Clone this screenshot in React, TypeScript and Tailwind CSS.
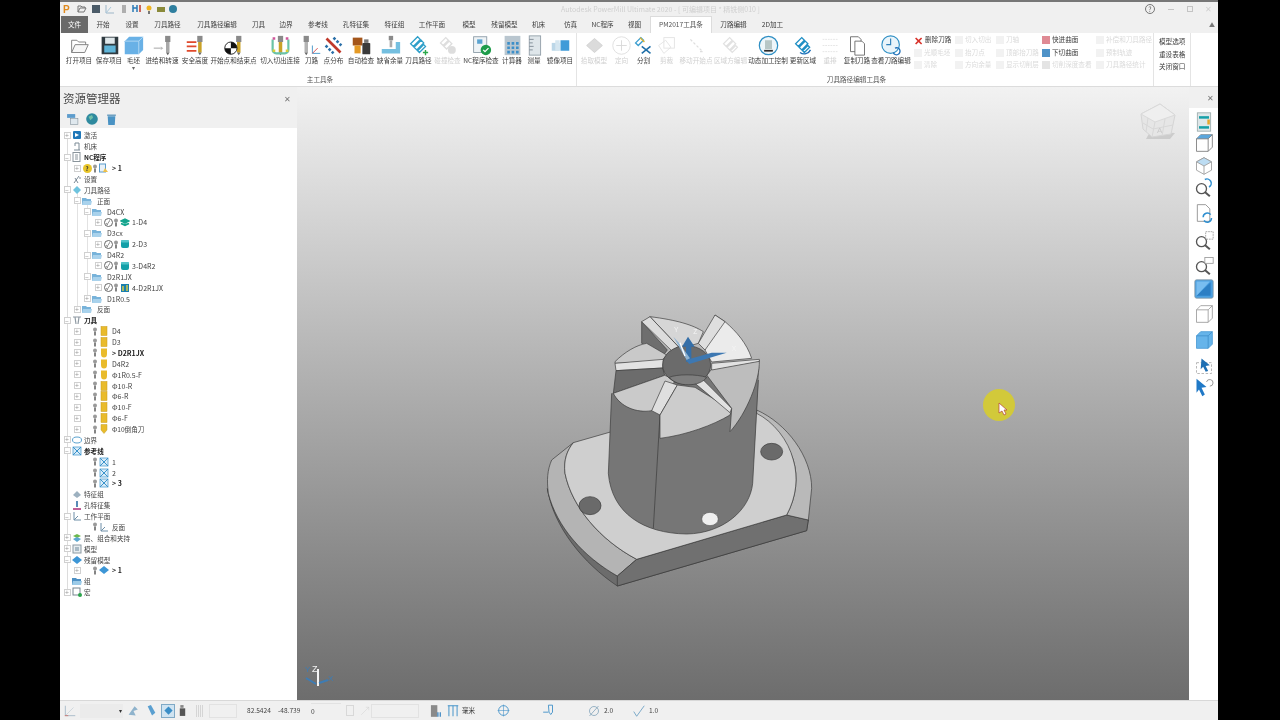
import type { ReactNode } from "react";

const FONT = "font-['Noto_Sans_CJK_SC','Noto_Sans',sans-serif]";

function Svg({ size = 22, children }: { size?: number; children: ReactNode }) {
  return (
    <svg width={size} height={size} viewBox="0 0 24 24" fill="none">
      {children}
    </svg>
  );
}

const toolBit = (x: number, c = "#c9a227") => (
  <g>
    <rect x={x} y="1" width="6" height="7" fill="#8a8a8a" />
    <rect x={x + 1} y="8" width="4" height="12" fill={c} />
    <path d={`M${x + 1} 20h4l-2 3z`} fill="#666" />
  </g>
);

const ribbonIcons: Record<string, ReactNode> = {
  open: (
    <>
      <path d="M3 20V6h6l2 2h8v3" stroke="#777" />
      <path d="M3 20l4-9h15l-4 9z" fill="#f7f7f7" stroke="#777" />
    </>
  ),
  save: (
    <>
      <rect x="3" y="2" width="19" height="20" fill="#2f3a40" />
      <rect x="7" y="3" width="11" height="7" fill="#dfe7ea" />
      <rect x="6" y="12" width="13" height="8" fill="#5fb4d8" />
    </>
  ),
  stock: (
    <>
      <path d="M2 7l5-5h16v15l-5 5H2z" fill="#69b1e6" />
      <path d="M2 7h16v15M18 7l5-5" stroke="#b9dcf5" />
    </>
  ),
  feed: (
    <>
      {toolBit(15, "#a8a8a8")}
      <path d="M2 15h8" stroke="#999" />
      <path d="M10 13l3 2-3 2z" fill="#bbb" />
    </>
  ),
  safe: (
    <>
      {toolBit(14)}
      <path d="M2 8h11M2 13h11M2 18h11" stroke="#e0492c" strokeWidth="2" />
    </>
  ),
  startend: (
    <>
      {toolBit(15)}
      <circle cx="9" cy="15" r="7" fill="#fff" stroke="#111" />
      <path d="M9 8a7 7 0 0 1 7 7H9zM9 15v7a7 7 0 0 1-7-7z" fill="#111" />
    </>
  ),
  leadin: (
    <>
      {toolBit(9)}
      <path d="M3 5v12a4 4 0 0 0 4 4h10a4 4 0 0 0 4-4V5" stroke="#6bc3a6" strokeWidth="2.5" />
      <path d="M3 4h3M18 4h3" stroke="#d0569a" strokeWidth="3" />
      <path d="M3 18h3M18 18h3" stroke="#d9cf3a" strokeWidth="3" />
    </>
  ),
  tool: (
    <>
      {toolBit(3, "#b3b3b3")}
      <path d="M13 21V12M13 21h9" stroke="#3b8fc4" />
      <path d="M13 21l6-6" stroke="#d23b3b" />
    </>
  ),
  dots: (
    <>
      <path d="M4 4l16 16" stroke="#c0392b" strokeWidth="3" />
      <path d="M12 3l9 9M3 12l9 9" stroke="#2a6fa8" strokeWidth="3" strokeDasharray="3 2" />
    </>
  ),
  check: (
    <>
      <rect x="2" y="3" width="11" height="9" fill="#a4561b" />
      <rect x="4" y="12" width="7" height="9" fill="#e59a25" />
      <rect x="13" y="9" width="9" height="13" rx="1" fill="#3a3a3a" />
      <rect x="15" y="5" width="5" height="4" fill="#777" />
    </>
  ),
  thick: (
    <>
      <rect x="10" y="1" width="5" height="5" fill="#8a8a8a" />
      <rect x="11" y="6" width="3" height="8" fill="#aaa" />
      <path d="M2 16h16V8h5v13H2z" fill="#74bfe0" />
    </>
  ),
  path: (
    <>
      <path d="M3 10l8-8 3 3-8 8zM7 14l8-8 3 3-8 8zM11 18l7-7 2 2-7 7z" stroke="#2e9fc9" strokeWidth="1.5" />
      <path d="M20 17v6M17 20h6" stroke="#2aa84a" strokeWidth="1.6" />
    </>
  ),
  collide: (
    <>
      <path d="M4 9l6-6 3 3-6 6zM8 13l6-6 3 3-6 6z" stroke="#c9c9c9" strokeWidth="1.5" />
      <circle cx="17" cy="17" r="4.5" fill="#c8c8c8" />
    </>
  ),
  ncchk: (
    <>
      <rect x="3" y="2" width="15" height="18" fill="#eef3f6" stroke="#8a9aa5" />
      <rect x="7" y="5" width="6" height="5" fill="#5ba3d0" />
      <circle cx="17" cy="17" r="6" fill="#1e9c4a" />
      <path d="M14 17l2 2 4-4" stroke="#fff" strokeWidth="1.5" />
    </>
  ),
  calc: (
    <>
      <rect x="3" y="1" width="18" height="22" fill="#b9c6cf" />
      <path d="M6 8h3v3H6zM11 8h3v3h-3zM16 8h3v3h-3zM6 13h3v3H6zM11 13h3v3h-3zM16 13h3v3h-3zM6 18h3v3H6zM11 18h3v3h-3zM16 18h3v3h-3z" fill="#3d8fc9" />
    </>
  ),
  measure: (
    <>
      <rect x="6" y="1" width="13" height="22" fill="#dfe6ea" stroke="#8f9ca5" />
      <path d="M6 5h5M6 9h4M6 13h5M6 17h4" stroke="#7a8791" />
    </>
  ),
  mirror: (
    <>
      <rect x="2" y="9" width="9" height="9" fill="#bcd7e8" />
      <rect x="6" y="6" width="5" height="12" fill="#d5e6f0" />
      <rect x="12" y="6" width="10" height="12" fill="#3f9bd8" />
    </>
  ),
  pick: <path d="M3 12l9-8 9 8-9 8z" fill="#c4c4c4" stroke="#b0b0b0" />,
  orient: (
    <>
      <circle cx="12" cy="12" r="10" stroke="#c6c6c6" />
      <path d="M12 6v12M6 12h12" stroke="#bdbdbd" />
    </>
  ),
  split: (
    <>
      <path d="M3 9l6-6 3 3-6 6z" stroke="#3b9ed0" strokeWidth="1.6" />
      <path d="M8 3l5 5" stroke="#e0b52c" strokeWidth="1.6" />
      <path d="M10 13l10 8M20 13l-10 8" stroke="#1f6fa8" strokeWidth="1.8" />
    </>
  ),
  trim: (
    <>
      <rect x="9" y="3" width="12" height="12" stroke="#cfcfcf" />
      <path d="M3 12l8-6 6 8-8 7z" stroke="#cfcfcf" />
    </>
  ),
  move: <path d="M5 5l14 14M16 19h5" stroke="#c9c9c9" strokeWidth="1.4" strokeDasharray="3 2" />,
  areaedit: <path d="M4 10l7-7 3 3-7 7zM8 14l7-7 3 3-7 7zM12 18l6-6 2 2-6 6z" stroke="#cdcdcd" strokeWidth="1.3" />,
  dynamic: (
    <>
      <circle cx="12" cy="12" r="10.5" fill="#eef6fa" stroke="#2f8fc4" strokeWidth="1.4" />
      <rect x="8" y="6" width="8" height="10" fill="#b7c6c6" />
      <rect x="7" y="17" width="10" height="2" fill="#2a2a2a" />
    </>
  ),
  update: (
    <>
      <path d="M3 10l7-7 3 3-7 7zM7 14l7-7 3 3-7 7zM11 18l6-6 2 2-6 6z" stroke="#1f8fc4" strokeWidth="1.5" />
      <path d="M8 20a8 8 0 0 0 12-3" stroke="#1f6fb8" strokeWidth="1.6" />
    </>
  ),
  reorder: <path d="M3 5h18M3 12h18M3 19h18" stroke="#cfcfcf" strokeDasharray="2 1" />,
  copy: (
    <>
      <path d="M4 2h9l3 3v14H4z" fill="#fff" stroke="#666" />
      <path d="M9 7h8l3 3v13H9z" fill="#fff" stroke="#666" />
    </>
  ),
  clock: (
    <>
      <circle cx="11" cy="11" r="10" fill="#e9f4fa" stroke="#2f8fc4" strokeWidth="1.3" />
      <path d="M11 4v7H6" stroke="#2f7fb8" strokeWidth="1.3" />
      <path d="M16 15a4 4 0 1 1-2 5" stroke="#1f6fb8" strokeWidth="1.5" />
    </>
  ),
};

const mainButtons = [
  ["打开项目", "open", "w-[30px]"],
  ["保存项目", "save", "w-[30px]"],
  ["毛坯", "stock", "w-[19px]"],
  ["进给和转速", "feed", "w-[38px]"],
  ["安全高度", "safe", "w-[28px]"],
  ["开始点和结束点", "startend", "w-[49px]"],
  ["切入切出连接", "leadin", "w-[44px]"],
  ["刀路", "tool", "w-[19px]"],
  ["点分布", "dots", "w-[25px]"],
  ["自动检查", "check", "w-[30px]"],
  ["缺省余量", "thick", "w-[28px]"],
  ["刀具路径", "path", "w-[29px]"],
  ["碰撞检查", "collide", "w-[29px]", "off"],
  ["NC程序检查", "ncchk", "w-[38px]"],
  ["计算器", "calc", "w-[24px]"],
  ["测量", "measure", "w-[20px]"],
  ["镜像项目", "mirror", "w-[32px]"],
];

const editButtons = [
  ["拾取模型", "pick", "w-[34px]", "off"],
  ["定向", "orient", "w-[21px]", "off"],
  ["分割", "split", "w-[23px]"],
  ["剪裁", "trim", "w-[23px]", "off"],
  ["移动开始点", "move", "w-[36px]", "off"],
  ["区域方编辑", "areaedit", "w-[33px]", "off"],
  ["动态加工控制", "dynamic", "w-[42px]"],
  ["更新区域", "update", "w-[28px]"],
  ["重排", "reorder", "w-[26px]", "off"],
  ["复制刀路", "copy", "w-[28px]"],
  ["查看刀路编辑", "clock", "w-[40px]"],
];

const tabs = [
  ["开始", "w-[30px]"],
  ["设置", "w-[28px]"],
  ["刀具路径", "w-[43px]"],
  ["刀具路径编辑", "w-[56px]"],
  ["刀具", "w-[27px]"],
  ["边界", "w-[28px]"],
  ["参考线", "w-[36px]"],
  ["孔特征集", "w-[40px]"],
  ["特征组", "w-[37px]"],
  ["工作平面", "w-[38px]"],
  ["模型", "w-[36px]"],
  ["残留模型", "w-[35px]"],
  ["机床", "w-[33px]"],
  ["仿真", "w-[31px]"],
  ["NC程序", "w-[33px]"],
  ["视图", "w-[31px]"],
];

function RibbonButton({ label, icon, width, off }: { label: string; icon: string; width: string; off?: boolean }) {
  return (
    <div className={`${width} flex flex-col items-center shrink-0`}>
      <div className={`h-[21px] flex items-center ${off ? "opacity-60" : ""}`}>
        <Svg size={21}>{ribbonIcons[icon]}</Svg>
      </div>
      <span className={`text-[6.6px] leading-[9px] whitespace-nowrap ${off ? "text-[#d0d0d0]" : "text-[#3c3c3c]"}`}>
        {label}
      </span>
      {label === "毛坯" && <span className="text-[6px] leading-[6px] text-[#666]">▾</span>}
    </div>
  );
}

function SmallItem({ label, color, on }: { label: string; color: string; on?: boolean }) {
  return (
    <div className="h-[12.5px] flex items-center gap-[2px] whitespace-nowrap">
      <span className={`w-[8px] h-[8px] shrink-0 ${color}`} />
      <span className={`text-[6.6px] ${on ? "text-[#3c3c3c]" : "text-[#dadada]"}`}>{label}</span>
    </div>
  );
}

function Ribbon() {
  return (
    <div className="h-[54px] bg-white flex pl-[4px] border-b border-[#dcdcdc] shrink-0">
      <div className="w-[512px] flex flex-col shrink-0">
        <div className="flex pt-[2px] flex-1">
          {mainButtons.map(([l, i, w, o]) => (
            <RibbonButton key={l} label={l} icon={i} width={w} off={!!o} />
          ))}
        </div>
        <div className="text-center text-[6.6px] leading-[10px] text-[#555] pb-[2px]">主工具条</div>
      </div>
      <div className="w-[577px] flex flex-col border-l border-[#e4e4e4] shrink-0">
        <div className="flex flex-1">
          <div className="flex pt-[2px] shrink-0">
            {editButtons.map(([l, i, w, o]) => (
              <RibbonButton key={l} label={l} icon={i} width={w} off={!!o} />
            ))}
          </div>
          <div className="flex pl-[3px] pt-[1px]">
            <div className="w-[41px]">
              <div className="h-[12.5px] flex items-center gap-[2px] whitespace-nowrap">
                <span className="text-[11px] leading-[10px] text-[#d8322a] font-bold">✕</span>
                <span className="text-[6.6px] text-[#3c3c3c]">删除刀路</span>
              </div>
              <SmallItem label="光顺毛坯" color="bg-[#f2f2f2]" />
              <SmallItem label="清除" color="bg-[#f2f2f2]" />
            </div>
            <div className="w-[41px]">
              <SmallItem label="切入切出" color="bg-[#f2f2f2]" />
              <SmallItem label="抬刀点" color="bg-[#f2f2f2]" />
              <SmallItem label="方向余量" color="bg-[#f2f2f2]" />
            </div>
            <div className="w-[46px]">
              <SmallItem label="刀轴" color="bg-[#f2f2f2]" />
              <SmallItem label="顶部抬刀路" color="bg-[#f2f2f2]" />
              <SmallItem label="显示切削层" color="bg-[#f2f2f2]" />
            </div>
            <div className="w-[54px]">
              <SmallItem label="快进曲面" color="bg-[#df8a94]" on />
              <SmallItem label="下切曲面" color="bg-[#4f93c8]" on />
              <SmallItem label="切削深度查看" color="bg-[#e4e4e4]" />
            </div>
            <div>
              <SmallItem label="补偿和刀具路径" color="bg-[#f2f2f2]" />
              <SmallItem label="预制轨迹" color="bg-[#f2f2f2]" />
              <SmallItem label="刀具路径统计" color="bg-[#f2f2f2]" />
            </div>
          </div>
        </div>
        <div className="w-[577px] text-center text-[6.6px] leading-[10px] text-[#555] pb-[2px] pr-[18px]">
          刀具路径编辑工具条
        </div>
      </div>
      <div className="w-[38px] border-l border-r border-[#e4e4e4] pl-[5px] pt-[2px] shrink-0">
        <div className="h-[12.5px] text-[6.6px] leading-[12.5px] text-[#3c3c3c]">模型选项</div>
        <div className="h-[12.5px] text-[6.6px] leading-[12.5px] text-[#3c3c3c]">重设表格</div>
        <div className="h-[12.5px] text-[6.6px] leading-[12.5px] text-[#3c3c3c]">关闭窗口</div>
      </div>
    </div>
  );
}

function TitleBar() {
  return (
    <div className="h-[16px] border-t-2 border-[#777777] flex items-center pl-[3px] relative shrink-0">
      <svg width="120" height="12" viewBox="0 0 120 12" fill="none">
        <text x="0" y="10" fontSize="10" fontWeight="700" fill="#e08a1e" fontFamily="Liberation Sans">P</text>
        <path d="M15 9V3h3l1 1h3v1M15 9l2-4h6l-2 4z" stroke="#777" />
        <rect x="29" y="2" width="8" height="8" fill="#4b5b68" />
        <path d="M43 2v8h8" stroke="#9db6c8" />
        <path d="M43 10l5-6" stroke="#a9c9dc" />
        <path d="M60 2v8M62 2v8" stroke="#999" strokeWidth="1.5" />
        <path d="M70 2v7M74 2v7M70 5h4" stroke="#2a79b5" strokeWidth="1.5" />
        <path d="M77 2v7" stroke="#c0392b" strokeWidth="1.5" />
        <circle cx="86" cy="5" r="2.5" fill="#efb420" />
        <rect x="85" y="8" width="2" height="3" fill="#777" />
        <rect x="94" y="4" width="8" height="5" fill="#8a8a3a" />
        <circle cx="110" cy="6" r="4" fill="#2f7f9f" />
      </svg>
      <div className="absolute left-[501px] top-[1px] text-[7px] leading-[12px] text-[#cfcfcf] whitespace-nowrap">
        Autodesk PowerMill Ultimate 2020 - [ 可编辑项目 * 精铣侧010 ]
      </div>
      <div className="ml-auto flex items-center gap-[10px] pr-[6px] text-[#b5b5b5]">
        <span className="w-[10px] h-[10px] border border-[#777] rounded-full text-[7px] leading-[8px] text-center text-[#666]">?</span>
        <span className="w-[6px] h-[1px] bg-[#c4c4c4] ml-[3px]" />
        <span className="w-[6px] h-[6px] border border-[#c4c4c4] ml-[3px]" />
        <span className="text-[8px] leading-[8px] text-[#d0d0d0] ml-[2px]">✕</span>
      </div>
    </div>
  );
}

function Tabs() {
  return (
    <div className="h-[17px] flex pl-[1px] items-stretch shrink-0 text-[6.6px] text-[#3c3c3c] relative">
      <div className="w-[27px] bg-[#6a6a6a] text-white flex items-center justify-center">文件</div>
      {tabs.map(([l, w]) => (
        <div key={l} className={`${w} flex items-center justify-center whitespace-nowrap`}>{l}</div>
      ))}
      <div className="w-[62px] bg-white border border-b-0 border-[#dcdcdc] flex items-center justify-center whitespace-nowrap text-[#555]">
        PM2017工具条
      </div>
      <div className="w-[43px] flex items-center justify-center">刀路编辑</div>
      <div className="w-[35px] flex items-center justify-center">2D加工</div>
      <span className="ml-auto pr-[3px] text-[6px] self-center text-[#777]">▲</span>
    </div>
  );
}

type TreeIcon =
  | "act" | "machine" | "nc" | "ncp" | "set" | "path" | "folder" | "t1" | "t2" | "t4"
  | "tools" | "bit" | "bitr" | "bitc" | "bound" | "ref" | "feat" | "hole" | "plane"
  | "layer" | "model" | "stock" | "group" | "macro";

function TreeGlyph({ kind }: { kind: TreeIcon }) {
  const shapes: Record<TreeIcon, ReactNode> = {
    act: (
      <>
        <rect x="1" y="1" width="8" height="8" rx="1" fill="#1f77b8" />
        <path d="M3 3l4 2-4 2z" fill="#fff" />
      </>
    ),
    machine: <path d="M2 9h6M7 9V2H3v3" stroke="#7a8a95" />,
    nc: (
      <>
        <rect x="1" y="0.5" width="7" height="9" fill="#fff" stroke="#8a949b" />
        <path d="M3 3h3M3 5h3M3 7h3" stroke="#8a949b" />
      </>
    ),
    ncp: (
      <>
        <rect x="0.5" y="1" width="6" height="8" fill="#e8f1f8" stroke="#5a9ccb" />
        <path d="M6 5l3 4H4z" fill="#edc04a" />
      </>
    ),
    set: <path d="M2 9l5-7M6 9L3 4M8 3v2" stroke="#7c8a96" />,
    path: <path d="M5 1l4 4-4 4-4-4z" fill="#6ec3de" />,
    folder: (
      <>
        <path d="M0 2h4l1 1h4v6H0z" fill="#78b3da" />
        <path d="M1 5h9l-1 4H0z" fill="#a9d2ec" />
      </>
    ),
    t1: <path d="M1 4l4-2 4 2-4 2zM1 6.5l4 2 4-2" stroke="#14a58e" strokeWidth="1.4" fill="#14a58e" />,
    t2: (
      <>
        <rect x="1" y="1" width="8" height="8" rx="2" fill="#14a0a8" />
        <rect x="1" y="1" width="8" height="2.5" rx="1" fill="#52c3c8" />
      </>
    ),
    t4: (
      <>
        <rect x="1" y="1" width="8" height="8" fill="#1a7fae" />
        <path d="M3 8V3M7 8V2" stroke="#e4d13f" strokeWidth="1.4" />
      </>
    ),
    tools: <path d="M1 2h8M3 2l1 7M7 2L6 9" stroke="#8f9aa3" strokeWidth="1.2" />,
    bit: <rect x="2" y="0.5" width="6" height="9" fill="#e9bb2b" stroke="#c89a18" strokeWidth="0.5" />,
    bitr: <path d="M2 0.5h6V6a3 3.5 0 0 1-6 0z" fill="#e9bb2b" />,
    bitc: <path d="M2 0.5h6V6L5 9.5 2 6z" fill="#e9bb2b" stroke="#bfa030" strokeWidth="0.5" />,
    bound: <ellipse cx="5" cy="5" rx="4.5" ry="3" stroke="#5aa2cf" fill="#fff" />,
    ref: (
      <>
        <rect x="1" y="1" width="8" height="8" fill="#d9ecf8" stroke="#3b93cb" strokeWidth="0.7" />
        <path d="M1 1l8 8M9 1l-8 8" stroke="#3b93cb" />
      </>
    ),
    feat: <path d="M1 6l4-4 4 4-4 3z" fill="#9db1c0" />,
    hole: (
      <>
        <path d="M5 1v6" stroke="#2e6fa5" strokeWidth="1.6" />
        <path d="M1 9h8" stroke="#b03a7f" strokeWidth="1.6" />
      </>
    ),
    plane: <path d="M2 1v8h7M2 9l4-4" stroke="#6e8fa8" />,
    layer: (
      <>
        <path d="M1 3l4-2 4 2-4 2z" fill="#6cb84e" />
        <path d="M1 6l4-2 4 2-4 3z" fill="#5ca7d0" />
      </>
    ),
    model: (
      <>
        <rect x="1" y="1" width="8" height="8" fill="#e7edf0" stroke="#8c9aa3" />
        <path d="M3 3h4v4H3z" fill="#a9bac5" />
      </>
    ),
    stock: <path d="M5 1l5 4-5 4-5-4z" fill="#3d96d6" />,
    group: (
      <>
        <path d="M0 2h4l1 1h4v6H0z" fill="#4d90c4" />
        <path d="M1 5h9l-1 4H0z" fill="#9ccbe8" />
      </>
    ),
    macro: (
      <>
        <rect x="1" y="1" width="7" height="7" fill="#fff" stroke="#77858f" />
        <circle cx="8" cy="8" r="2" fill="#2aa44a" />
      </>
    ),
  };
  return (
    <svg width="10" height="10" viewBox="0 0 10 10" fill="none" className="shrink-0">
      {shapes[kind]}
    </svg>
  );
}

type Row = {
  t: string;
  lv: 0 | 1 | 2 | 3 | 4;
  icon: TreeIcon;
  exp?: "+" | "-";
  check?: boolean;
  warn?: boolean;
  bold?: boolean;
};

const rows: Row[] = [
  { t: "激活", lv: 0, icon: "act", exp: "+" },
  { t: "机床", lv: 0, icon: "machine" },
  { t: "NC程序", lv: 0, icon: "nc", exp: "-", bold: true },
  { t: "> 1", lv: 4, icon: "ncp", exp: "+", warn: true, bold: true },
  { t: "设置", lv: 0, icon: "set" },
  { t: "刀具路径", lv: 0, icon: "path", exp: "-" },
  { t: "正面", lv: 1, icon: "folder", exp: "-" },
  { t: "D4CX", lv: 2, icon: "folder", exp: "-" },
  { t: "1-D4", lv: 3, icon: "t1", exp: "+", check: true },
  { t: "D3cx", lv: 2, icon: "folder", exp: "-" },
  { t: "2-D3", lv: 3, icon: "t2", exp: "+", check: true },
  { t: "D4R2", lv: 2, icon: "folder", exp: "-" },
  { t: "3-D4R2", lv: 3, icon: "t2", exp: "+", check: true },
  { t: "D2R1JX", lv: 2, icon: "folder", exp: "-" },
  { t: "4-D2R1JX", lv: 3, icon: "t4", exp: "+", check: true },
  { t: "D1R0.5", lv: 2, icon: "folder", exp: "+" },
  { t: "反面", lv: 1, icon: "folder", exp: "+" },
  { t: "刀具", lv: 0, icon: "tools", exp: "-", bold: true },
  { t: "D4", lv: 4, icon: "bit", exp: "+" },
  { t: "D3", lv: 4, icon: "bit", exp: "+" },
  { t: "> D2R1JX", lv: 4, icon: "bitr", exp: "+", bold: true },
  { t: "D4R2", lv: 4, icon: "bitr", exp: "+" },
  { t: "Φ1R0.5-F", lv: 4, icon: "bitr", exp: "+" },
  { t: "Φ10-R", lv: 4, icon: "bit", exp: "+" },
  { t: "Φ6-R", lv: 4, icon: "bit", exp: "+" },
  { t: "Φ10-F", lv: 4, icon: "bit", exp: "+" },
  { t: "Φ6-F", lv: 4, icon: "bit", exp: "+" },
  { t: "Φ10倒角刀", lv: 4, icon: "bitc", exp: "+" },
  { t: "边界", lv: 0, icon: "bound", exp: "+" },
  { t: "参考线", lv: 0, icon: "ref", exp: "-", bold: true },
  { t: "1", lv: 4, icon: "ref" },
  { t: "2", lv: 4, icon: "ref" },
  { t: "> 3", lv: 4, icon: "ref", bold: true },
  { t: "特征组", lv: 0, icon: "feat" },
  { t: "孔特征集", lv: 0, icon: "hole" },
  { t: "工作平面", lv: 0, icon: "plane", exp: "-" },
  { t: "反面", lv: 4, icon: "plane" },
  { t: "层、组合和夹持", lv: 0, icon: "layer", exp: "+" },
  { t: "模型", lv: 0, icon: "model", exp: "+" },
  { t: "残留模型", lv: 0, icon: "stock", exp: "-" },
  { t: "> 1", lv: 4, icon: "stock", exp: "+", bold: true },
  { t: "组", lv: 0, icon: "group" },
  { t: "宏", lv: 0, icon: "macro", exp: "+" },
];

const rowPad = ["pl-[2px]", "pl-[12px]", "pl-[22px]", "pl-[33px]", "pl-[12px]"];
const iconSlot = ["w-[12px]", "w-[15px]", "w-[15px]", "w-[13px]", "w-[14px]"];

function Bulb() {
  return (
    <svg width="6" height="9" viewBox="0 0 6 9" className="shrink-0">
      <circle cx="3" cy="2.5" r="2" fill="#9a9a9a" />
      <rect x="2.2" y="4.5" width="1.6" height="4" fill="#666" />
    </svg>
  );
}

function TreeRow({ row }: { row: Row }) {
  const withBulb = row.lv >= 3;
  const textSize = /[\u4e00-\u9fff]/.test(row.t) ? "text-[6.6px]" : "text-[7px]";
  return (
    <div className={`h-[10.88px] flex items-center ${rowPad[row.lv]} relative`}>
      <span className="w-[10px] shrink-0 flex justify-center">
        {row.exp && (
          <span className="w-[7px] h-[7px] border border-[#d0d0d0] bg-white text-[#999] flex items-center justify-center text-[7px] leading-[5px]">
            {row.exp === "+" ? "+" : "–"}
          </span>
        )}
      </span>
      {withBulb && (
        <span className="w-[10px] shrink-0 flex justify-center">
          {row.check && (
            <span className="w-[9px] h-[9px] rounded-full border border-[#666] bg-white text-[6px] leading-[7px] text-center text-[#333]">✓</span>
          )}
          {row.warn && (
            <span className="w-[9px] h-[9px] rounded-full bg-[#e8c52a] text-[6px] leading-[9px] text-center font-bold text-[#333]">?</span>
          )}
        </span>
      )}
      {withBulb && <Bulb />}
      <span className={`${iconSlot[row.lv]} shrink-0 ${withBulb ? "pl-[1px]" : ""}`}>
        <TreeGlyph kind={row.icon} />
      </span>
      <span className={`${textSize} leading-[10px] whitespace-nowrap ${row.bold ? "font-bold text-[#222]" : "text-[#444]"}`}>
        {row.t}
      </span>
    </div>
  );
}

function Explorer() {
  return (
    <div className="w-[237px] flex flex-col shrink-0">
      <div className="h-[23px] flex items-center justify-between pl-[3px] pr-[6px]">
        <span className="text-[11.5px] text-[#4a4a4a]">资源管理器</span>
        <span className="text-[8px] text-[#777]">✕</span>
      </div>
      <div className="h-[18px] flex items-center gap-[6px] pl-[6px]">
        <Svg size={13}>
          <rect x="2" y="2" width="15" height="7" fill="#5d9ccc" />
          <rect x="8" y="10" width="14" height="11" fill="#dfe8ee" stroke="#7a8a95" />
        </Svg>
        <Svg size={14}>
          <circle cx="12" cy="12" r="10" fill="#2f8a9f" />
          <path d="M6 8l6-3 2 5-5 4z" fill="#6fbfa8" />
        </Svg>
        <Svg size={13}>
          <path d="M5 6h14l-1 16H6z" fill="#4a93c4" />
          <rect x="4" y="3" width="16" height="2" fill="#3a7fae" />
        </Svg>
      </div>
      <div className="flex-1 bg-white pt-[2px] relative">
        <span className="absolute left-[7px] top-[7px] h-[457px] w-px bg-[#dcdcdc]" />
        <span className="absolute left-[17px] top-[62px] h-[120px] w-px bg-[#e2e2e2]" />
        <span className="absolute left-[27px] top-[73px] h-[98px] w-px bg-[#e2e2e2]" />
        <div className="relative">
          {rows.map((r, i) => (
            <TreeRow key={i} row={r} />
          ))}
        </div>
      </div>
    </div>
  );
}

function Model() {
  return (
    <svg width="300" height="300" viewBox="0 0 900 900" className="absolute left-[233px] top-[213px]" fill="none" stroke="#3a3a3a" strokeWidth="2" strokeLinejoin="round">
      <path d="M52 565C70 680 160 790 262 858L830 692L835 660L770 645L320 778L262 828C160 770 80 680 55 580Z" fill="#6c6c6c" />
      <path d="M130 428L65 480C52 510 50 540 55 580C80 680 160 770 262 828L320 778C210 720 125 620 105 520C100 480 112 450 130 428Z" fill="#b4b4b4" />
      <path d="M262 828L320 778L770 645L835 660L830 692L262 858Z" fill="#707070" />
      <path d="M680 330C770 370 845 470 845 565L835 660L770 645C800 590 805 530 790 480C770 420 720 365 680 345Z" fill="#b9b9b9" />
      <path d="M130 428L245 395L680 340C730 365 775 420 790 480C805 530 800 590 770 645L320 778C210 720 125 620 105 520C100 480 112 450 130 428Z" fill="#cfcfcf" />
      <ellipse cx="180" cy="617" rx="33" ry="27" fill="#6a6a6a" />
      <ellipse cx="725" cy="455" rx="33" ry="25" fill="#6a6a6a" />
      <path d="M245 280L235 520C245 640 340 700 470 702C580 700 660 630 668 550L688 200Z" fill="#767676" stroke="none" />
      <path d="M245 280L235 520C245 640 340 700 470 702C580 700 660 630 668 550L685 240" />
      <path d="M390 345L370 685" />
      <ellipse cx="540" cy="657" rx="25" ry="20" fill="#efefef" stroke="#555" />
      <path d="M335 65L335 130L395 172L412 150Z" fill="#6e6e6e" />
      <path d="M360 50C440 60 490 75 520 95L505 130L470 140L445 140Z" fill="#d6d6d6" />
      <path d="M335 65L360 50L445 140L425 152Z" fill="#dcdcdc" />
      <path d="M555 45L585 65C620 95 650 130 665 175L545 186L525 150Z" fill="#ebebeb" />
      <path d="M505 130L555 45L585 65L525 150Z" fill="#dedede" />
      <path d="M255 185C285 155 320 135 350 130L410 165L395 182L255 190Z" fill="#c9c9c9" />
      <path d="M255 190L400 178L398 204L258 212Z" fill="#e2e2e2" />
      <path d="M258 212L398 204L404 226L250 280Z" fill="#6c6c6c" />
      <path d="M250 280L404 226L438 240L365 332C320 340 270 320 250 280Z" fill="#cacaca" />
      <path d="M405 243L442 255L390 345L365 332Z" fill="#dfdfdf" />
      <path d="M442 255L495 262L605 330L600 345C550 375 470 405 390 415L390 345Z" fill="#cccccc" />
      <path d="M495 250L520 240L605 325L600 338Z" fill="#e1e1e1" />
      <path d="M530 225L545 208L688 182C690 240 650 340 600 395L605 325Z" fill="#bdbdbd" />
      <path d="M545 190L688 178L688 184L545 210Z" fill="#e2e2e2" />
      <ellipse cx="470" cy="195" rx="72" ry="58" fill="#6b6b6b" />
      <path d="M418 232C440 222 500 222 530 232C510 262 440 262 418 232Z" fill="#7e7e7e" />
      <g stroke="none">
        <path d="M474 110L494 140H484V185H468V140H456Z" fill="#356fa8" />
        <path d="M468 180L545 158L590 158L545 172L478 192Z" fill="#3d78b2" />
        <path d="M470 180L430 110L448 130L480 175Z" fill="#8fb3d2" />
        <path d="M450 128L465 168" stroke="#fff" strokeWidth="4" />
      </g>
      <g fill="#f4f4f4" stroke="none" fontSize="20" fontFamily="Liberation Sans">
        <text x="432" y="96">Y</text>
        <text x="490" y="102">Z</text>
        <text x="605" y="152">X</text>
      </g>
    </svg>
  );
}

function Viewport() {
  return (
    <div className="flex-1 relative overflow-hidden bg-linear-to-b from-[#f2f2f2] to-[#6d6d6d]">
      <Model />
      <svg width="40" height="40" viewBox="0 0 40 40" className="absolute left-[841px] top-[14px]" fill="none">
        <path d="M8 38l24 0 5-6-25-1z" fill="#9a9a9a" opacity="0.35" />
        <path d="M3 13L22 3L37 14L33 33L14 36L5 28Z" fill="#e6e6e6" stroke="#d5d5d5" />
        <path d="M3 13L22 3L37 14L17 21Z" fill="#efefef" stroke="#dadada" />
        <path d="M17 21L14 36M10 17L8 31M27 18L24 35M5 22L15 28L35 24" stroke="#d8d8d8" />
        <text x="19" y="32" fontSize="8" fill="#c9c9c9" fontFamily="Liberation Sans">A</text>
      </svg>
      <svg width="34" height="30" viewBox="0 0 34 30" className="absolute left-[5px] top-[574px]" fill="none">
        <text x="10" y="11" fontSize="9" fill="#f3f3f3" fontFamily="Liberation Sans">Z</text>
        <text x="3" y="11" fontSize="8" fill="#3d7cb4" fontFamily="Liberation Sans">Y</text>
        <text x="26" y="20" fontSize="8" fill="#3d7cb4" fontFamily="Liberation Sans">X</text>
        <path d="M16 8v17" stroke="#f5f5f5" strokeWidth="2" />
        <path d="M4 17l10 6M17 22l9-3" stroke="#3d7cb4" strokeWidth="2" />
      </svg>
      <span className="absolute left-[686px] top-[302px] w-[32px] h-[32px] rounded-full bg-[#d2c93a]" />
      <svg width="10" height="14" viewBox="0 0 10 14" className="absolute left-[701px] top-[315px]">
        <path d="M1 1v10l3-2 2 4 2-1-2-4h3z" fill="#fff" stroke="#b5423a" strokeWidth="0.7" />
      </svg>
    </div>
  );
}

const sideIcons: ReactNode[] = [
  <>
    <rect x="4" y="1" width="16" height="22" fill="#dfe7e9" stroke="#9aa" />
    <rect x="6" y="5" width="12" height="3" fill="#15a0a8" />
    <rect x="6" y="17" width="12" height="3" fill="#15a0a8" />
    <rect x="16" y="9" width="3" height="6" fill="#e6a72a" />
  </>,
  <>
    <path d="M3 7l5-5h14v15l-5 5H3z" stroke="#777" fill="#fff" />
    <path d="M3 7l5-5h14l-5 5z" fill="#5aa6dc" />
    <path d="M3 7h14v15M17 7l5-5" stroke="#777" />
  </>,
  <>
    <path d="M12 2l9 5v10l-9 5-9-5V7z" fill="#fff" stroke="#999" />
    <path d="M12 2l9 5-9 5-9-5z" fill="#bcdcf2" stroke="#999" />
    <path d="M12 12v10" stroke="#999" />
  </>,
  <>
    <circle cx="9" cy="14" r="6" stroke="#555" strokeWidth="1.6" fill="#fff" />
    <path d="M13 18l6 5" stroke="#555" strokeWidth="2.4" />
    <path d="M13 3a5 5 0 1 1 5 9" stroke="#2f8fd0" strokeWidth="1.8" />
  </>,
  <>
    <path d="M4 2h10l5 5v15H4z" fill="#fff" stroke="#888" />
    <path d="M11 17a5 5 0 0 1 9-3M21 18a5 5 0 0 1-9 3" stroke="#2f8fd0" strokeWidth="1.8" />
  </>,
  <>
    <circle cx="9" cy="14" r="6" stroke="#555" strokeWidth="1.6" fill="#fff" />
    <path d="M13 18l6 5" stroke="#555" strokeWidth="2.4" />
    <rect x="14" y="2" width="9" height="9" stroke="#999" strokeDasharray="2 1" />
  </>,
  <>
    <circle cx="9" cy="14" r="6" stroke="#555" strokeWidth="1.6" fill="#fff" />
    <path d="M13 18l6 5" stroke="#555" strokeWidth="2.4" />
    <rect x="13" y="3" width="10" height="7" stroke="#999" fill="#fff" />
  </>,
  <>
    <rect x="1" y="1" width="22" height="22" rx="2" fill="#4a9fe0" stroke="#8a9aa5" />
    <path d="M3 20L20 4v16z" fill="#2d7fc4" />
    <path d="M3 3h16L3 20z" fill="#78bdf0" />
  </>,
  <>
    <path d="M3 7l5-5h14v15l-5 5H3z" stroke="#999" />
    <path d="M3 7h14v15M17 7l5-5" stroke="#999" />
  </>,
  <>
    <path d="M3 7l5-5h14v15l-5 5H3z" fill="#66b4ea" stroke="#4a9ad4" />
    <path d="M3 7h14v15M17 7l5-5" stroke="#3f8fca" />
  </>,
  <>
    <rect x="3" y="8" width="18" height="13" stroke="#aaa" strokeDasharray="3 2" />
    <path d="M9 3l10 8-5 1 3 6-3 1-3-6-3 3z" fill="#1f70b4" />
  </>,
  <>
    <path d="M3 2l12 10-6 1 4 8-3 2-4-8-3 4z" fill="#2079c7" />
    <path d="M15 6a4 4 0 1 1 4 5" stroke="#888" />
  </>,
];

const sideGaps = ["mt-0", "mt-[1px]", "mt-[3px]", "mt-[1px]", "mt-[6px]", "mt-[7px]", "mt-[5px]", "mt-[4px]", "mt-[5px]", "mt-[6px]", "mt-[6px]", "mt-[1px]"];

function SideBar() {
  return (
    <div className="w-[29px] flex flex-col shrink-0">
      <div className="h-[21px] flex items-center justify-end pr-[4px]">
        <span className="text-[8px] text-[#777]">✕</span>
      </div>
      <div className="flex-1 bg-white pt-[4px] flex flex-col items-center">
        {sideIcons.map((icon, i) => (
          <div key={i} className={`h-[20px] ${sideGaps[i]}`}>
            <Svg size={20}>{icon}</Svg>
          </div>
        ))}
      </div>
    </div>
  );
}

function StatusBar() {
  return (
    <div className="h-[20px] flex items-center text-[6.6px] text-[#444] shrink-0 pl-[3px] border-t border-[#d8d8d8]">
      <Svg size={14}>
        <path d="M4 3v17h17" stroke="#7f9db3" />
        <path d="M4 20L18 6" stroke="#b9c7d1" />
        <path d="M3 20h6" stroke="#d04a3a" />
      </Svg>
      <div className="w-[43px] h-[14px] ml-[3px] bg-[#ebebeb] flex items-center justify-end pr-[1px] text-[6px] text-[#333]">▾</div>
      <div className="ml-[4px] flex items-center gap-[1px]">
        <Svg size={13}><path d="M3 20L14 4l6 6-8 3 4 8z" fill="#8fb3cc" /></Svg>
        <span className="w-[3px]" />
        <Svg size={13}><path d="M5 4l6-2 8 14-6 5z" fill="#5a9fd0" /></Svg>
        <span className="w-[1px]" />
        <span className="w-[14px] h-[14px] bg-[#cfe3f1] border border-[#7fa9c6] flex items-center justify-center">
          <Svg size={11}><path d="M12 3l9 9-9 9-9-9z" fill="#3b8ec7" /></Svg>
        </span>
        <Svg size={13}><rect x="7" y="8" width="10" height="14" fill="#555" /><rect x="8" y="2" width="6" height="5" fill="#888" /></Svg>
      </div>
      <div className="ml-[7px] w-[8px] h-[12px] bg-[repeating-linear-gradient(90deg,#d5d5d5_0,#d5d5d5_1px,transparent_1px,transparent_2px)]" />
      <div className="ml-[5px] w-[28px] h-[14px] border border-[#e2e2e2]" />
      <span className="ml-[10px] w-[31px]">82.5424</span>
      <span className="w-[33px]">-48.739</span>
      <span className="w-[30px] border-t border-[#e2e2e2] leading-[14px]">0</span>
      <span className="ml-[5px] w-[8px] h-[11px] border border-[#d8d8d8]" />
      <span className="ml-[6px] w-[10px]"><Svg size={10}><path d="M3 21L21 3M14 3h7v7" stroke="#ccc" /></Svg></span>
      <div className="ml-[1px] w-[48px] h-[14px] border border-[#e2e2e2]" />
      <span className="ml-[9px]"><Svg size={14}><rect x="5" y="2" width="11" height="20" fill="#8a8a8a" /><path d="M17 14v8M21 14v8" stroke="#2f7fc0" strokeWidth="2" /></Svg></span>
      <span className="ml-[4px]"><Svg size={14}><path d="M3 3h18M5 3v18M19 3v18M12 3v18" stroke="#3b8ec7" strokeWidth="1.6" /></Svg></span>
      <span className="ml-[2px] w-[20px] text-[#333]">毫米</span>
      <span className="ml-[15px]"><Svg size={13}><circle cx="12" cy="12" r="9" stroke="#3b8ec7" strokeWidth="1.6" /><path d="M12 1v22M1 12h22" stroke="#3b8ec7" /></Svg></span>
      <span className="ml-[32px]"><Svg size={14}><path d="M11 2h7v12l-3 4-3-4zM2 14h9" stroke="#3b8ec7" strokeWidth="1.5" /></Svg></span>
      <span className="ml-[32px]"><Svg size={12}><circle cx="12" cy="12" r="9" stroke="#7a9db5" strokeWidth="1.5" /><path d="M3 22L21 2" stroke="#7a9db5" strokeWidth="1.5" /></Svg></span>
      <span className="ml-[4px] w-[28px]">2.0</span>
      <span><Svg size={14}><path d="M3 13l5 8L21 3" stroke="#6ba0c4" strokeWidth="1.5" /></Svg></span>
      <span className="ml-[3px]">1.0</span>
    </div>
  );
}

export default function App() {
  return (
    <div className={`w-[1280px] h-[720px] bg-black overflow-hidden pl-[60px] pr-[62px] ${FONT}`}>
      <div className="w-full h-full bg-[#f0f0f0] flex flex-col blur-[0.3px]">
        <TitleBar />
        <Tabs />
        <Ribbon />
        <div className="flex-1 flex min-h-0">
          <Explorer />
          <Viewport />
          <SideBar />
        </div>
        <StatusBar />
      </div>
    </div>
  );
}
